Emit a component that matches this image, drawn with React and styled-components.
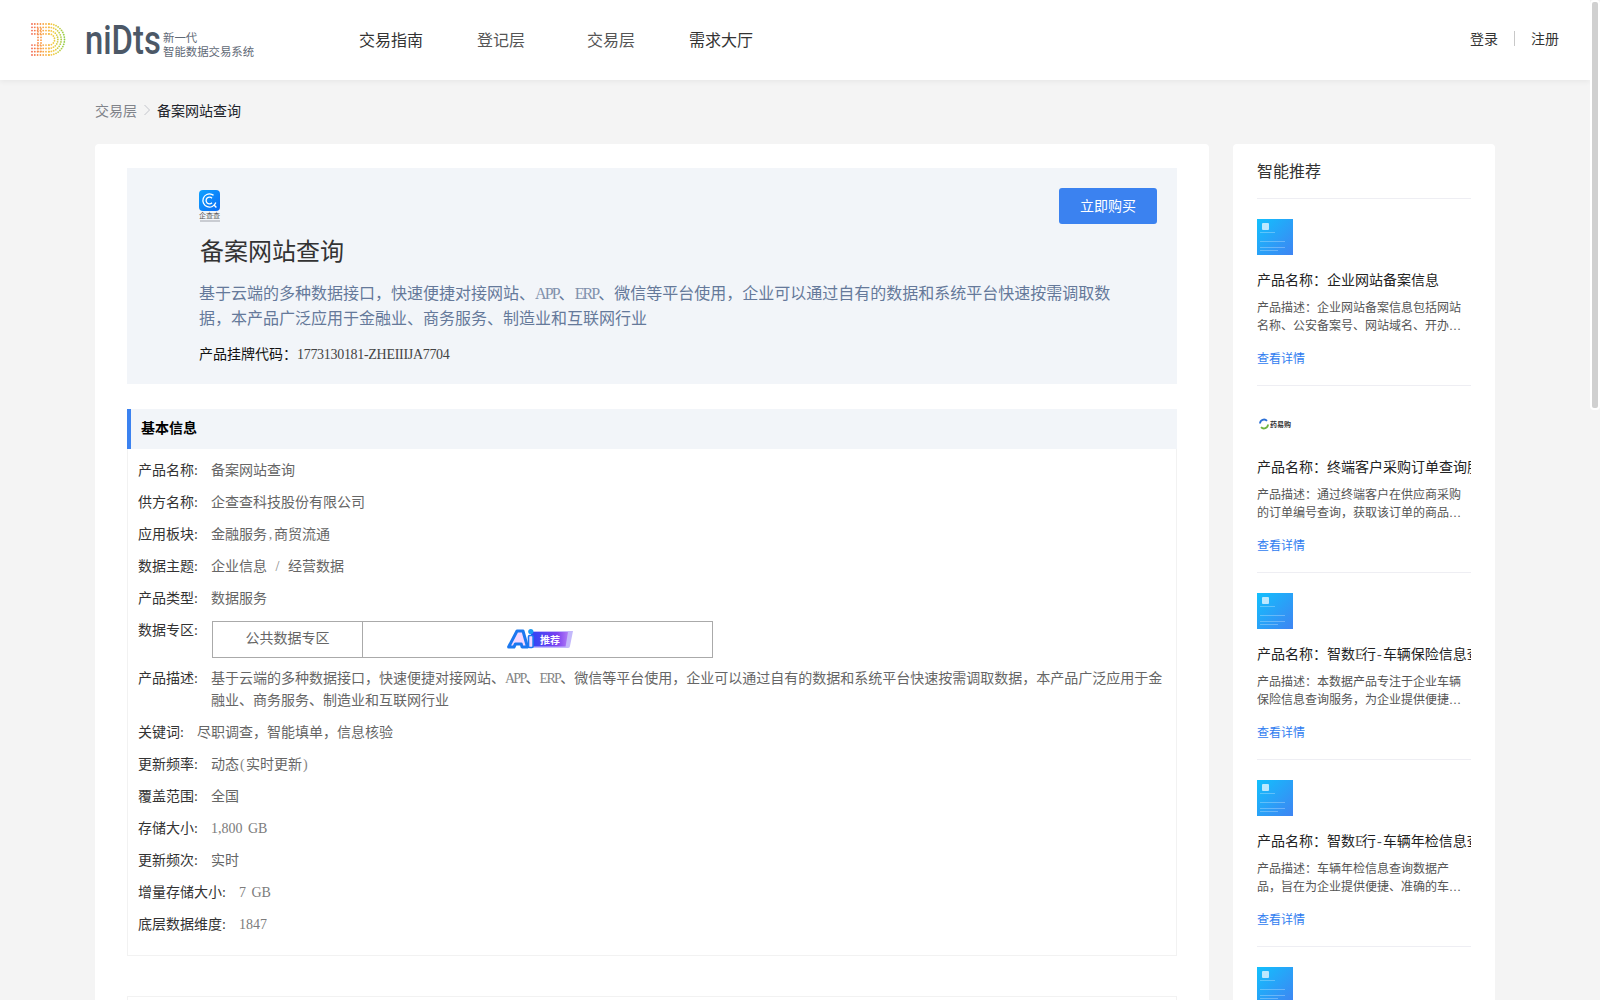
import React from "react";
import styled, { createGlobalStyle } from "styled-components";

const GlobalStyle = createGlobalStyle`
  html {
    background: #f4f4f4;
    scrollbar-width: none;
  }
  body {
    margin: 0;
    background: #f4f4f4;
    font-family: "Liberation Serif", "Noto Sans CJK SC", serif;
    color: #333;
  }
`;

const basicInfo = [
  { label: "产品名称", value: "备案网站查询" },
  { label: "供方名称", value: "企查查科技股份有限公司" },
  { label: "应用板块", value: "金融服务,商贸流通" },
  { label: "数据主题", value: "企业信息 / 经营数据" },
  { label: "产品类型", value: "数据服务" },
  { label: "数据专区", zone: true },
  {
    label: "产品描述",
    value:
      "基于云端的多种数据接口，快速便捷对接网站、APP、ERP、微信等平台使用，企业可以通过自有的数据和系统平台快速按需调取数据，本产品广泛应用于金融业、商务服务、制造业和互联网行业",
  },
  { label: "关键词", value: "尽职调查，智能填单，信息核验" },
  { label: "更新频率", value: "动态(实时更新)" },
  { label: "覆盖范围", value: "全国" },
  { label: "存储大小", value: "1,800 GB" },
  { label: "更新频次", value: "实时" },
  { label: "增量存储大小", value: "7 GB" },
  { label: "底层数据维度", value: "1847" },
];

const recommends = [
  {
    name: "企业网站备案信息",
    desc: "企业网站备案信息包括网站名称、公安备案号、网站域名、开办者名称、备案时间等多项内容信息",
    thumb: "blue",
  },
  {
    name: "终端客户采购订单查询服务",
    desc: "通过终端客户在供应商采购的订单编号查询，获取该订单的商品名称、数量和金额等多项内容信息",
    thumb: "mark",
  },
  {
    name: "智数E行-车辆保险信息查询",
    desc: "本数据产品专注于企业车辆保险信息查询服务，为企业提供便捷、准确的车辆保险信息内容和结果",
    thumb: "blue",
  },
  {
    name: "智数E行-车辆年检信息查询",
    desc: "车辆年检信息查询数据产品，旨在为企业提供便捷、准确的车辆年检信息内容，帮助企业降低风险",
    thumb: "blue",
  },
];

const sideItems = Array.from({ length: 12 }, (_, i) => recommends[i === 4 ? 0 : i % 4]);

// latin runs are half an em wide per char in the reference
function Mixed({ text }) {
  return text.split(/([\x20-\x7e]+)/).map((part, i) => {
    if (/^[A-Z]+$/.test(part)) return <Caps key={i}>{part}</Caps>;
    if (/^[\s,/()\-]+$/.test(part)) {
      return (
        <Punct key={i} $chars={part.length}>
          {part}
        </Punct>
      );
    }
    if (/[\x20-\x7e]/.test(part)) return <Plain key={i}>{part}</Plain>;
    return part;
  });
}

function dotColor(t) {
  const stops = [
    [240, 90, 80],
    [250, 160, 70],
    [245, 205, 70],
    [140, 205, 70],
  ];
  const p = Math.min(t, 0.999) * (stops.length - 1);
  const i = Math.floor(p);
  const f = p - i;
  const c = stops[i].map((v, k) => Math.round(v + (stops[i + 1][k] - v) * f));
  return `rgb(${c.join(",")})`;
}

function buildLogoDots() {
  const dots = [];
  [15.5, 12.2, 8.9, 5.6].forEach((r) => {
    const cy = 16.5;
    const sx = 19;
    for (let x = 2; x < sx; x += 2.8) {
      dots.push([x, cy - r]);
      dots.push([x, cy + r]);
    }
    const steps = Math.round(r * 1.3);
    for (let s = 0; s <= steps; s++) {
      const a = -Math.PI / 2 + (Math.PI * s) / steps;
      dots.push([sx + r * Math.cos(a), cy + r * Math.sin(a)]);
    }
  });
  for (let y = 6; y < 29; y += 2.8) {
    dots.push([8, y]);
    dots.push([11, y]);
  }
  return dots;
}

function LogoMark() {
  return (
    <svg width="37" height="34" viewBox="0 0 37 34">
      {buildLogoDots().map(([x, y], i) => (
        <circle key={i} cx={x} cy={y} r="0.9" fill={dotColor(x / 35)} />
      ))}
    </svg>
  );
}

function QccLogo() {
  return (
    <LogoColumn>
      <svg width="21" height="21" viewBox="0 0 21 21">
        <defs>
          <linearGradient id="qcc" x1="0" y1="0" x2="1" y2="1">
            <stop offset="0" stopColor="#0fa2ff" />
            <stop offset="1" stopColor="#0a6cf5" />
          </linearGradient>
        </defs>
        <rect width="21" height="21" rx="4" fill="url(#qcc)" />
        <circle cx="10.5" cy="10.5" r="6.6" fill="none" stroke="#fff" strokeWidth="1.3" strokeDasharray="33 8" transform="rotate(20 10.5 10.5)" />
        <path d="M13 8.2a3.4 3.4 0 1 0 0 4.6" fill="none" stroke="#fff" strokeWidth="1.3" />
        <path d="M14.8 14.8l2.6 2.6" stroke="#fff" strokeWidth="1.4" />
      </svg>
      <QccName>企查查</QccName>
      <QccSlogan />
    </LogoColumn>
  );
}

function AiBadge() {
  return (
    <svg width="66" height="22" viewBox="0 0 66 22">
      <defs>
        <linearGradient id="tag" x1="0" y1="0" x2="1" y2="0">
          <stop offset="0" stopColor="#2d46f5" />
          <stop offset="0.7" stopColor="#7a3ff0" />
          <stop offset="1" stopColor="#b07af5" />
        </linearGradient>
      </defs>
      <path d="M24 3h42l-3 15a2 2 0 0 1-2 2H24z" fill="#c3b8fb" />
      <path d="M24 4h37l-2.4 14.6H24z" fill="url(#tag)" />
      <path
        d="M10 3h6l4.5 16h-5.5l-.7-3H8.4L7 19H1.6z"
        fill="#f4d8ff"
        stroke="#1b78f0"
        strokeWidth="3"
        strokeLinejoin="round"
      />
      <rect x="21.5" y="7.5" width="4.6" height="12" rx="1.2" fill="#f4d8ff" stroke="#1b78f0" strokeWidth="1.6" />
      <circle cx="23.8" cy="3.6" r="2.6" fill="#1d9af2" />
      <text x="33" y="15.6" fontSize="10" fontWeight="700" fill="#fff" fontFamily="Noto Sans CJK SC, sans-serif">
        推荐
      </text>
    </svg>
  );
}

function Thumb({ kind }) {
  if (kind === "mark") {
    return (
      <MarkThumb>
        <svg width="10" height="12" viewBox="0 0 10 12">
          <path d="M1 5.5a4 4 0 0 1 7-2.6" fill="none" stroke="#2a6fd6" strokeWidth="1.8" />
          <path d="M9 6.5a4 4 0 0 1-7 2.6" fill="none" stroke="#6cb33f" strokeWidth="1.8" />
        </svg>
        <MarkName>药易购</MarkName>
      </MarkThumb>
    );
  }
  return (
    <BlueThumb>
      <ThumbIcon />
      <ThumbLine $w={15} $gap={6} />
      <ThumbLine $w={25} $gap={3} />
      <ThumbLine $w={25} />
      <ThumbLine $w={18} />
    </BlueThumb>
  );
}

export default function App() {
  return (
    <Viewport>
      <GlobalStyle />
      <Header>
        <Brand>
          <LogoMark />
          <WordMark>niDts</WordMark>
          <Tagline>
            <span>新一代</span>
            <span>智能数据交易系统</span>
          </Tagline>
        </Brand>
        <Nav>
          <NavItem $dark>交易指南</NavItem>
          <NavItem>登记层</NavItem>
          <NavItem>交易层</NavItem>
          <NavItem $dark>需求大厅</NavItem>
        </Nav>
        <Account>
          <span>登录</span>
          <AccountDivider />
          <span>注册</span>
        </Account>
      </Header>

      <Page>
        <Breadcrumb>
          <CrumbLink>交易层</CrumbLink>
          <svg width="8" height="12" viewBox="0 0 8 12">
            <path d="M1.5 1l5 5-5 5" fill="none" stroke="#c4c6cc" strokeWidth="1" />
          </svg>
          <CrumbCurrent>备案网站查询</CrumbCurrent>
        </Breadcrumb>

        <Columns>
          <MainCard>
            <Hero>
              <HeroTop>
                <QccLogo />
                <BuyButton>立即购买</BuyButton>
              </HeroTop>
              <HeroTitle>备案网站查询</HeroTitle>
              <HeroDesc>
                <Mixed text="基于云端的多种数据接口，快速便捷对接网站、APP、ERP、微信等平台使用，企业可以通过自有的数据和系统平台快速按需调取数据，本产品广泛应用于金融业、商务服务、制造业和互联网行业" />
              </HeroDesc>
              <ListingCode>
                产品挂牌代码：<CodeValue>1773130181-ZHEIIIJA7704</CodeValue>
              </ListingCode>
            </Hero>

            <SectionHead>基本信息</SectionHead>
            <InfoBox>
              {basicInfo.map((row) => (
                <InfoRow key={row.label}>
                  <InfoLabel>{row.label}:</InfoLabel>
                  {row.zone ? (
                    <ZoneTable>
                      <ZoneName>公共数据专区</ZoneName>
                      <ZoneBadge>
                        <AiBadge />
                      </ZoneBadge>
                    </ZoneTable>
                  ) : (
                    <InfoValue>
                      <Mixed text={row.value} />
                    </InfoValue>
                  )}
                </InfoRow>
              ))}
            </InfoBox>
            <NextSection />
          </MainCard>

          <SideCard>
            <SideTitle>智能推荐</SideTitle>
            {sideItems.map((item, i) => (
              <SideItem key={i}>
                <Thumb kind={item.thumb} />
                <ItemName>
                  产品名称：
                  <Mixed text={item.name} />
                </ItemName>
                <ItemDesc>产品描述：{item.desc}</ItemDesc>
                <ItemLink>查看详情</ItemLink>
              </SideItem>
            ))}
          </SideCard>
        </Columns>
      </Page>
      <ScrollThumb />
    </Viewport>
  );
}

const Viewport = styled.div`
  width: 1590px;
`;

const ScrollThumb = styled.div`
  position: fixed;
  top: 0;
  right: 0;
  width: 10px;
  height: 410px;
  box-sizing: border-box;
  background: #d0d0d0;
  border: 2px solid #fff;
  border-radius: 4px;
`;

const Caps = styled.span`
  letter-spacing: -0.12em;
  opacity: 0.8;
`;

const Punct = styled.span`
  display: inline-block;
  width: ${(props) => props.$chars * 0.5}em;
  line-height: 1;
  text-align: center;
  white-space: pre;
  opacity: 0.8;
`;

const Plain = styled.span`
  white-space: pre;
  word-spacing: 2px;
  opacity: 0.85;
`;

const Header = styled.header`
  height: 80px;
  box-sizing: border-box;
  display: flex;
  align-items: center;
  background: #fff;
  box-shadow: 0 2px 5px rgba(0, 0, 0, 0.05);
  padding: 0 31px 2px 30px;
`;

const Brand = styled.div`
  width: 306px;
  display: flex;
  align-items: center;
  margin-top: 2px;
`;

const WordMark = styled.span`
  width: 78px;
  margin-left: 18px;
  font-family: "Roboto", sans-serif;
  font-size: 41px;
  font-weight: 500;
  line-height: 44px;
  color: #4c5867;
  transform: scaleX(0.8);
  transform-origin: left center;
`;

const Tagline = styled.div`
  display: flex;
  flex-direction: column;
  font-family: "Noto Sans CJK SC", sans-serif;
  font-size: 11.4px;
  line-height: 14px;
  color: #5f6976;
  margin-top: 8px;
`;

const Nav = styled.nav`
  display: flex;
`;

const NavItem = styled.a`
  width: 110px;
  text-align: center;
  font-size: 16px;
  color: ${(props) => (props.$dark ? "#333" : "#555")};
`;

const Account = styled.div`
  margin-left: auto;
  padding-bottom: 2px;
  display: flex;
  align-items: center;
  gap: 16px;
  font-size: 14px;
  color: #333;
`;

const AccountDivider = styled.i`
  width: 1px;
  height: 15px;
  background: #c8c8c8;
`;

const Page = styled.main`
  width: 1400px;
  margin: 0 auto;
  padding-bottom: 24px;
`;

const Breadcrumb = styled.div`
  height: 64px;
  box-sizing: border-box;
  padding-bottom: 4px;
  display: flex;
  align-items: center;
  gap: 6px;
  font-size: 14px;
`;

const CrumbLink = styled.span`
  color: #80838a;
`;

const CrumbCurrent = styled.span`
  color: #20232a;
`;

const Columns = styled.div`
  display: flex;
  gap: 24px;
`;

const MainCard = styled.section`
  width: 1114px;
  display: flex;
  flex-direction: column;
  padding: 24px 32px;
  box-sizing: border-box;
  background: #fff;
  border-radius: 4px;
`;

const Hero = styled.div`
  height: 216px;
  flex-shrink: 0;
  box-sizing: border-box;
  padding: 20px 20px 0 72px;
  background: #f2f5f9;
  margin-bottom: 25px;
`;

const HeroTop = styled.div`
  display: flex;
  justify-content: space-between;
  align-items: flex-start;
`;

const LogoColumn = styled.div`
  display: flex;
  flex-direction: column;
  width: 21px;
  height: 33px;
  margin-top: 2px;
  align-items: center;
  svg {
    display: block;
  }
`;

const QccName = styled.span`
  font-family: "Noto Sans CJK SC", sans-serif;
  font-size: 7px;
  line-height: 9px;
  white-space: nowrap;
  color: #555;
`;

const QccSlogan = styled.i`
  width: 20px;
  height: 2px;
  background: #c9ccd2;
`;

const HeroTitle = styled.h1`
  margin: 11px 0 0 1px;
  font-size: 24px;
  font-weight: 400;
  line-height: 34px;
  color: #333;
`;

const HeroDesc = styled.p`
  width: 925px;
  margin: 13px 0 0;
  font-size: 16px;
  line-height: 24.5px;
  color: #65799a;
`;

const ListingCode = styled.div`
  margin-top: 13px;
  font-size: 14px;
  line-height: 22px;
  color: #111;
`;

const CodeValue = styled.span`
  letter-spacing: -0.3px;
  color: #444;
`;

const BuyButton = styled.button`
  width: 98px;
  height: 36px;
  flex-shrink: 0;
  border: 0;
  border-radius: 3px;
  background: #3b82f0;
  color: #fff;
  font-family: inherit;
  font-size: 14px;
  padding-bottom: 3px;
`;

const SectionHead = styled.h2`
  height: 40px;
  flex-shrink: 0;
  margin: 0;
  box-sizing: border-box;
  padding-left: 10px;
  border-left: 4px solid #3b82f0;
  background: #f2f5f9;
  font-size: 14px;
  font-weight: 700;
  line-height: 40px;
  color: #000;
`;

const InfoBox = styled.div`
  display: flex;
  flex-direction: column;
  gap: 10px;
  padding: 11px 12px 19px 10px;
  border: 1px solid #f2f2f2;
  border-top: 0;
`;

const InfoRow = styled.div`
  display: flex;
  align-items: flex-start;
  font-size: 14px;
  line-height: 22px;
`;

const InfoLabel = styled.span`
  flex-shrink: 0;
  margin-right: 13px;
  color: #333;
`;

const InfoValue = styled.span`
  color: #666;
`;

const ZoneTable = styled.div`
  width: 501px;
  height: 37px;
  box-sizing: border-box;
  margin: 1px 0 0 1px;
  display: flex;
  border: 1px solid #aaa;
`;

const ZoneName = styled.div`
  width: 150px;
  padding-bottom: 2px;
  box-sizing: border-box;
  display: flex;
  align-items: center;
  justify-content: center;
  border-right: 1px solid #aaa;
  color: #666;
`;

const ZoneBadge = styled.div`
  flex: 1;
  display: flex;
  align-items: center;
  justify-content: center;
  padding: 0 0 2px 5px;
  svg {
    display: block;
  }
`;

const NextSection = styled.div`
  flex: 1;
  margin-top: 40px;
  border: 1px solid #f2f2f2;
`;

const SideCard = styled.aside`
  width: 262px;
  box-sizing: border-box;
  padding: 0 24px;
  background: #fff;
  border-radius: 4px;
`;

const SideTitle = styled.div`
  height: 54px;
  line-height: 56px;
  font-size: 16px;
  color: #333;
  border-bottom: 1px solid #eeeef3;
`;

const SideItem = styled.article`
  height: 187px;
  box-sizing: border-box;
  padding-top: 20px;
  border-bottom: 1px solid #eeeef3;
`;

const BlueThumb = styled.div`
  width: 36px;
  height: 36px;
  box-sizing: border-box;
  padding: 4px 3px;
  display: flex;
  flex-direction: column;
  gap: 2px;
  background: linear-gradient(135deg, #12c0fd, #3f84f2);
`;

const ThumbIcon = styled.i`
  width: 7px;
  height: 7px;
  margin-left: 2px;
  border-radius: 1px;
  background: rgba(255, 255, 255, 0.7);
`;

const ThumbLine = styled.i`
  width: ${(props) => props.$w}px;
  height: 1px;
  margin-bottom: ${(props) => props.$gap || 0}px;
  background: rgba(255, 255, 255, 0.28);
`;

const MarkThumb = styled.div`
  width: 36px;
  height: 36px;
  display: flex;
  align-items: center;
  gap: 1px;
  padding-left: 2px;
  box-sizing: border-box;
`;

const MarkName = styled.span`
  font-family: "Noto Sans CJK SC", sans-serif;
  font-size: 7px;
  font-weight: 700;
  white-space: nowrap;
  color: #333;
`;

const ItemName = styled.div`
  margin-top: 15px;
  font-size: 14px;
  line-height: 22px;
  color: #222;
  white-space: nowrap;
  overflow: hidden;
`;

const ItemDesc = styled.div`
  margin-top: 7px;
  font-size: 12px;
  line-height: 18px;
  height: 36px;
  color: #555;
  display: -webkit-box;
  -webkit-box-orient: vertical;
  -webkit-line-clamp: 2;
  overflow: hidden;
`;

const ItemLink = styled.a`
  display: block;
  margin-top: 15px;
  font-size: 12px;
  line-height: 18px;
  color: #2f7cf0;
`;
